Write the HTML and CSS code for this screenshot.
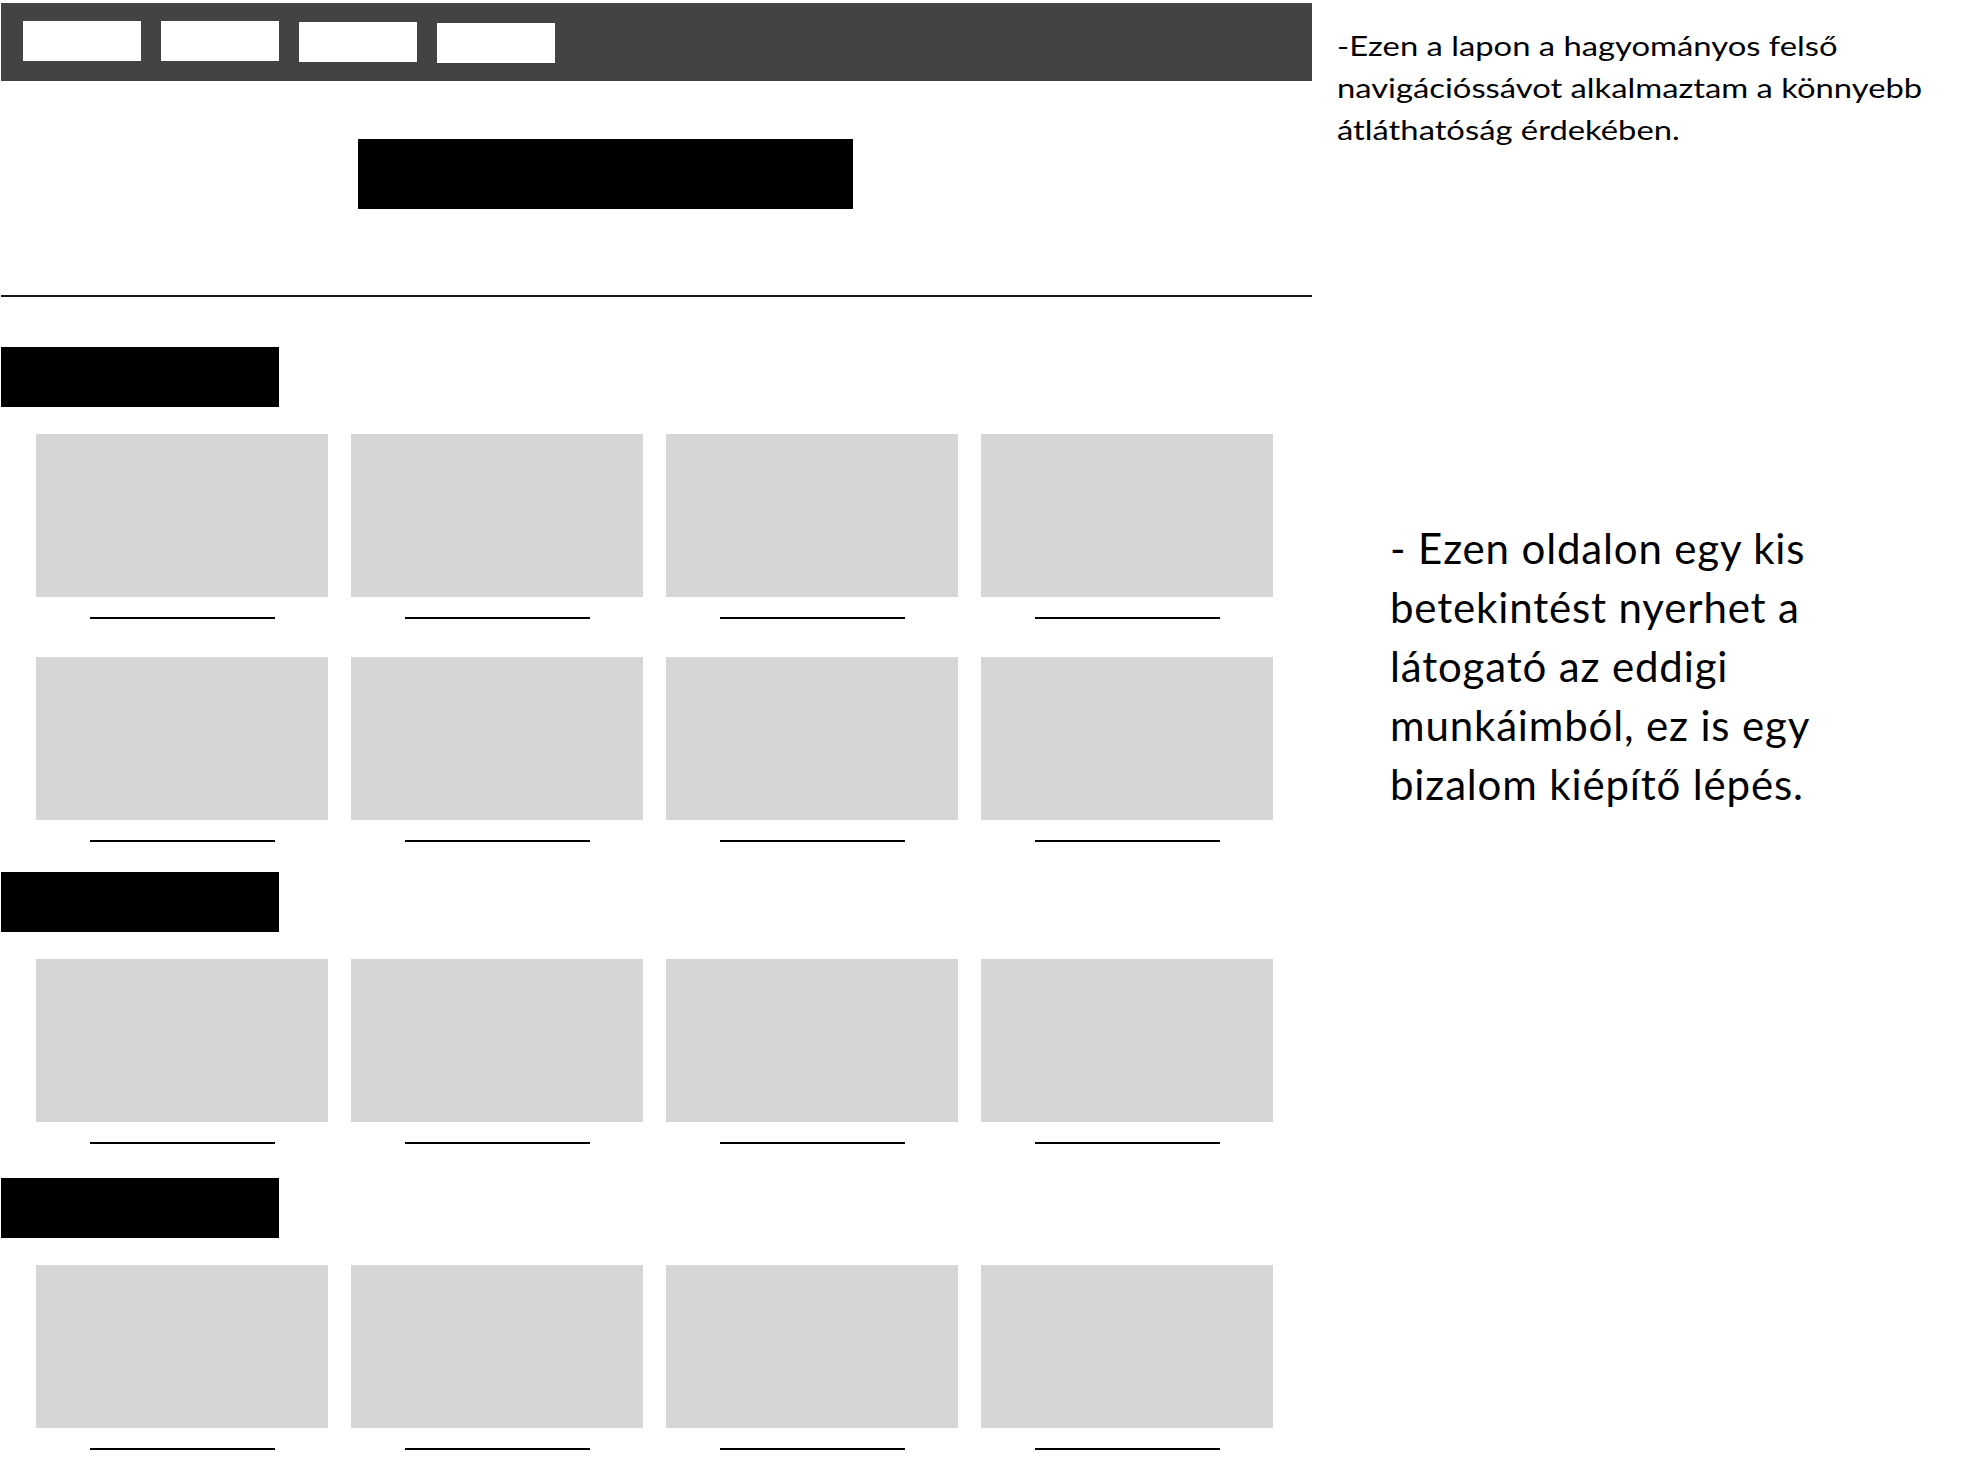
FILE: index.html
```html
<!DOCTYPE html>
<html lang="hu">
<head>
<meta charset="utf-8">
<title>Referenciák – drótváz</title>
<link rel="stylesheet" href="styles.css">
</head>
<body>
<div class="page">
  <main class="main">
    <nav class="nav">
      <span class="nav-btn"></span>
      <span class="nav-btn"></span>
      <span class="nav-btn nav-btn-3"></span>
      <span class="nav-btn nav-btn-4"></span>
    </nav>
    <header class="header">
      <div class="title"></div>
    </header>
    <hr class="divider">

    <section class="section">
      <div class="heading"></div>
      <div class="grid">
        <div class="item"><div class="card"></div><div class="line"></div></div>
        <div class="item"><div class="card"></div><div class="line"></div></div>
        <div class="item"><div class="card"></div><div class="line"></div></div>
        <div class="item"><div class="card"></div><div class="line"></div></div>
        <div class="item"><div class="card"></div><div class="line"></div></div>
        <div class="item"><div class="card"></div><div class="line"></div></div>
        <div class="item"><div class="card"></div><div class="line"></div></div>
        <div class="item"><div class="card"></div><div class="line"></div></div>
      </div>
    </section>

    <section class="section">
      <div class="heading"></div>
      <div class="grid">
        <div class="item"><div class="card"></div><div class="line"></div></div>
        <div class="item"><div class="card"></div><div class="line"></div></div>
        <div class="item"><div class="card"></div><div class="line"></div></div>
        <div class="item"><div class="card"></div><div class="line"></div></div>
      </div>
    </section>

    <section class="section">
      <div class="heading"></div>
      <div class="grid">
        <div class="item"><div class="card"></div><div class="line"></div></div>
        <div class="item"><div class="card"></div><div class="line"></div></div>
        <div class="item"><div class="card"></div><div class="line"></div></div>
        <div class="item"><div class="card"></div><div class="line"></div></div>
      </div>
    </section>
  </main>

  <aside class="notes">
    <p class="note note-small">-Ezen a lapon a hagyományos felső<br>navigációssávot alkalmaztam a könnyebb<br>átláthatóság érdekében.</p>
    <p class="note note-large">- Ezen oldalon egy kis<br>betekintést nyerhet a<br>látogató az eddigi<br>munkáimból, ez is egy<br>bizalom kiépítő lépés.</p>
  </aside>
</div>
</body>
</html>
```

FILE: styles.css
```css
html, body {
  margin: 0;
  padding: 0;
  background: #ffffff;
}

.page {
  display: flex;
  align-items: flex-start;
  width: 1972px;
  height: 1472px;
  overflow: hidden;
}

.main {
  width: 1311px;
  padding-left: 1px;
  padding-top: 3px;
  flex: none;
}

.nav {
  height: 78px;
  background: #434343;
  display: flex;
  align-items: flex-start;
  gap: 20px;
  padding: 18px 0 0 22px;
  box-sizing: border-box;
}

.nav-btn {
  display: block;
  width: 118px;
  height: 40px;
  background: #ffffff;
}

.nav-btn-3 { margin-top: 1px; }
.nav-btn-4 { margin-top: 2px; }

.header {
  height: 214px;
  padding-top: 58px;
  padding-left: 357px;
  box-sizing: border-box;
}

.title {
  width: 495px;
  height: 70px;
  background: #000000;
}

.divider {
  margin: 0;
  border: 0;
  height: 2px;
  background: #1a1a1a;
}

.section {
  margin-top: 50px;
}

.section + .section {
  margin-top: 30px;
}

.section:last-child {
  margin-top: 34px;
}

.heading {
  width: 278px;
  height: 60px;
  background: #000000;
}

.grid {
  margin-top: 27px;
  padding-left: 35px;
  display: grid;
  grid-template-columns: repeat(4, 292px);
  column-gap: 23px;
  row-gap: 38px;
}

.item {
  display: flex;
  flex-direction: column;
  align-items: center;
}

.card {
  width: 100%;
  height: 163px;
  background: #d6d6d6;
}

.line {
  margin-top: 20px;
  width: 185px;
  height: 2px;
  background: #000000;
}

.notes {
  flex: 1;
  padding-left: 25px;
  padding-top: 25px;
  font-family: Lato, "Liberation Sans", sans-serif;
  color: #000000;
}

.note {
  margin: 0;
}

.note-small {
  font-size: 26px;
  line-height: 42px;
  white-space: nowrap;
  transform: scaleX(1.26);
  transform-origin: 0 0;
}

.note-large {
  margin-top: 368px;
  margin-left: 53px;
  font-size: 42px;
  line-height: 59px;
  letter-spacing: 0.85px;
  white-space: nowrap;
}
```
